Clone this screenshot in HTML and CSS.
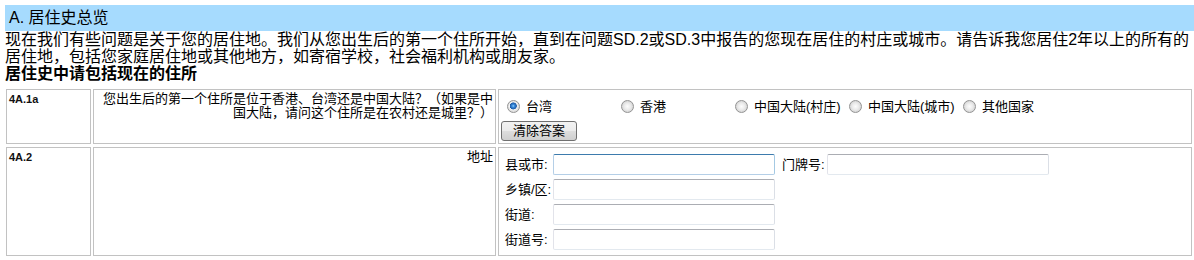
FILE: index.html
```html
<!DOCTYPE html>
<html lang="zh-CN">
<head>
<meta charset="utf-8">
<title>居住史总览</title>
<link rel="stylesheet" href="styles.css">
</head>
<body>
<div class="page">
  <div class="section-title">A. 居住史总览</div>
  <p class="intro">现在我们有些问题是关于您的居住地。我们从您出生后的第一个住所开始，直到在问题SD.2或SD.3中报告的您现在居住的村庄或城市。请告诉我您居住2年以上的所有的<br>居住地，包括您家庭居住地或其他地方，如寄宿学校，社会福利机构或朋友家。</p>
  <p class="intro-strong">居住史中请包括现在的住所</p>
  <table class="qtable">
    <tr>
      <td class="qid">4A.1a</td>
      <td class="qtext">您出生后的第一个住所是位于香港、台湾还是中国大陆？（如果是中<br>国大陆，请问这个住所是在农村还是城里？）</td>
      <td class="qanswer qanswer-radio">
        <div class="options">
          <label class="option"><input type="radio" name="q4a1a" checked><span>台湾</span></label>
          <label class="option"><input type="radio" name="q4a1a"><span>香港</span></label>
          <label class="option"><input type="radio" name="q4a1a"><span>中国大陆(村庄)</span></label>
          <label class="option"><input type="radio" name="q4a1a"><span>中国大陆(城市)</span></label>
          <label class="option"><input type="radio" name="q4a1a"><span>其他国家</span></label>
        </div>
        <button type="button" class="clear-btn">清除答案</button>
      </td>
    </tr>
    <tr>
      <td class="qid">4A.2</td>
      <td class="qtext">地址</td>
      <td class="qanswer qanswer-address">
        <div class="address-grid">
          <span class="flabel">县或市:</span><input type="text" class="field field-focus">
          <span class="flabel flabel-2">门牌号:</span><input type="text" class="field">
          <span class="flabel">乡镇/区:</span><input type="text" class="field">
          <span></span><span></span>
          <span class="flabel">街道:</span><input type="text" class="field">
          <span></span><span></span>
          <span class="flabel">街道号:</span><input type="text" class="field">
          <span></span><span></span>
        </div>
      </td>
    </tr>
  </table>
</div>
</body>
</html>
```
FILE: styles.css
```css
html, body {
  margin: 0;
  padding: 0;
  background: #ffffff;
}

body {
  font-family: "Liberation Sans", "Noto Sans CJK SC", sans-serif;
  color: #000000;
  overflow: hidden;
}

.page {
  padding: 5px 5px 0 5px;
}

.section-title {
  background: #a6dbfe;
  height: 26px;
  line-height: 26px;
  font-size: 16px;
  padding-left: 4px;
  margin-right: -5px;
}

.intro {
  margin: 0;
  font-size: 16px;
  line-height: 17px;
  white-space: nowrap;
}

.intro-strong {
  margin: 0;
  font-size: 16px;
  line-height: 18px;
  font-weight: bold;
}

.qtable {
  margin: 3px 0 0 -1px;
  width: 1190px;
  table-layout: fixed;
  border-collapse: separate;
  border-spacing: 2px 3px;
}

.qtable td {
  box-sizing: border-box;
  border: 1px solid #c2c2c2;
  vertical-align: top;
  padding: 2px;
}

.qtable .qid {
  width: 85px;
  font-size: 11px;
  font-weight: bold;
  line-height: 14px;
  color: #111111;
}

.qtable .qtext {
  width: 403px;
  font-size: 13px;
  line-height: 14px;
  text-align: right;
  white-space: nowrap;
}

.qtable .qanswer {
  font-size: 13px;
}

.qtable .qanswer-radio {
  padding: 0 2px 2px 2px;
}

.options {
  display: flex;
  height: 17px;
  margin: 8px 0 6px 0;
  padding-left: 4px;
}

.option {
  width: 114px;
  display: flex;
  align-items: center;
  line-height: 17px;
}

.option input {
  appearance: none;
  -webkit-appearance: none;
  width: 13px;
  height: 13px;
  margin: 0 6px 0 2px;
  border-radius: 50%;
  border: 1px solid #939393;
  box-sizing: border-box;
  background: radial-gradient(circle at 50% 50%, #fdfdfd 0, #ececec 40%, #d2d2d2 80%, #e0e0e0 100%);
  flex: none;
}

.option input:checked {
  background: radial-gradient(circle at 48% 45%, #9fd6ff 0, #3a8ee0 1.2px, #1d5aa6 3.2px, #f6f6f6 3.8px, #e6e6e6 4.6px, #cfcfcf 100%);
}

.clear-btn {
  display: block;
  width: 76px;
  height: 20px;
  padding: 0;
  margin: 0;
  border: 1px solid #707070;
  border-radius: 3px;
  background: linear-gradient(#f2f2f2 0%, #ebebeb 48%, #dddddd 52%, #cfcfcf 100%);
  font-family: "Liberation Sans", "Noto Sans CJK SC", sans-serif;
  font-size: 13px;
  line-height: 18px;
  color: #000000;
}

.qtable .qanswer-address {
  padding: 6px 2px 5px 6px;
}

.address-grid {
  display: grid;
  grid-template-columns: 48px 222px 52px 222px;
  grid-auto-rows: 21px;
  row-gap: 4px;
  align-items: center;
}

.flabel {
  line-height: 17px;
  white-space: nowrap;
}

.flabel-2 {
  padding-left: 7px;
}

.field {
  box-sizing: border-box;
  width: 222px;
  height: 21px;
  margin: 0;
  padding: 1px 3px;
  border: 1px solid;
  border-color: #abadb3 #dbdfe6 #e3e9ef #e2e3ea;
  border-radius: 2px;
  background: #ffffff;
  font-size: 13px;
}

.field-focus {
  border-color: #3d7bad #a4c9e3 #b5cfe7 #b5cfe7;
}
```
